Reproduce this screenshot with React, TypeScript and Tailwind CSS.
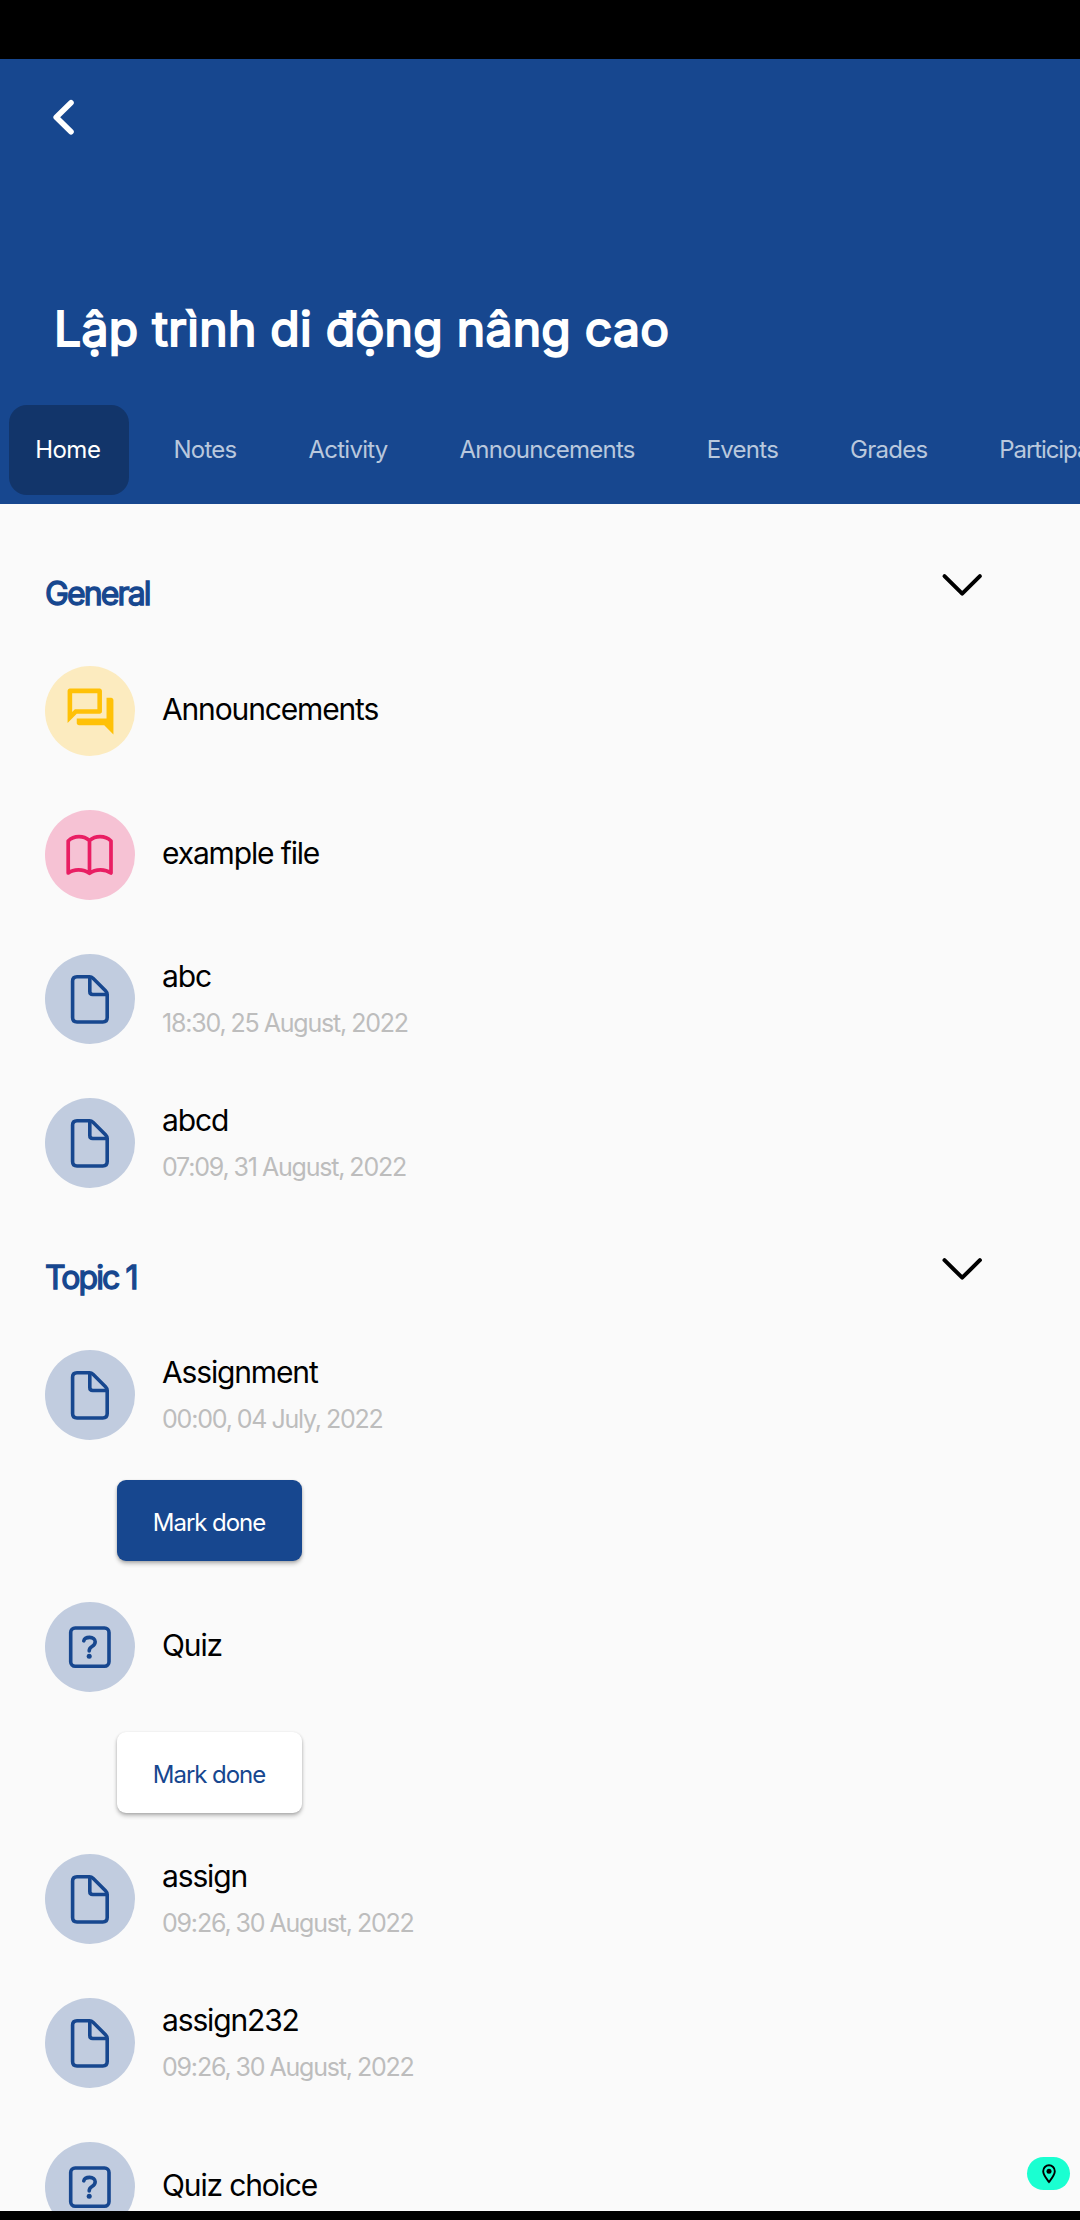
import type { ReactNode } from "react";

type Kind = "forum" | "book" | "file" | "quiz";
type Item = { kind: Kind; title: string; date?: string; button?: "filled" | "plain" };

const tabs = ["Home", "Notes", "Activity", "Announcements", "Events", "Grades", "Participants"];

const sections: { title: string; items: Item[] }[] = [
  {
    title: "General",
    items: [
      { kind: "forum", title: "Announcements" },
      { kind: "book", title: "example file" },
      { kind: "file", title: "abc", date: "18:30, 25 August, 2022" },
      { kind: "file", title: "abcd", date: "07:09, 31 August, 2022" },
    ],
  },
  {
    title: "Topic 1",
    items: [
      { kind: "file", title: "Assignment", date: "00:00, 04 July, 2022", button: "filled" },
      { kind: "quiz", title: "Quiz", button: "plain" },
      { kind: "file", title: "assign", date: "09:26, 30 August, 2022" },
      { kind: "file", title: "assign232", date: "09:26, 30 August, 2022" },
      { kind: "quiz", title: "Quiz choice" },
    ],
  },
];

const circle: Record<Kind, string> = {
  forum: "bg-[#fcebbf] text-[#ffc107]",
  book: "bg-[#f6c2d4] text-[#e91e63]",
  file: "bg-[#c1ccdf] text-[#17478f]",
  quiz: "bg-[#c1ccdf] text-[#17478f]",
};

const glyphs: Record<Kind, ReactNode> = {
  forum: (
    <svg viewBox="0 0 24 24" className="size-[55px]" fill="currentColor">
      <path d="M15 4v7H5.17L4 12.17V4h11m1-2H3c-.55 0-1 .45-1 1v14l4-4h10c.55 0 1-.45 1-1V3c0-.55-.45-1-1-1zm5 4h-2v9H6v2c0 .55.45 1 1 1h11l4 4V7c0-.55-.45-1-1-1z" />
    </svg>
  ),
  book: (
    <svg viewBox="0 0 90 90" className="size-[90px]" fill="none" stroke="currentColor" strokeWidth="3.7" strokeLinejoin="round">
      <path d="M44.5 30.5C41.5 28 38 26.7 34 26.7C29.5 26.7 26 28.2 23.2 31V63C26 60.8 29.5 59.8 33.5 59.8C38 59.8 41.5 61 44.5 63.4C47.5 61 51 59.8 55.5 59.8C59.5 59.8 63 60.8 66 63V31C63.2 28.2 59.5 26.7 55 26.7C51 26.7 47.5 28 44.5 30.5ZM44.5 30.5V63" />
    </svg>
  ),
  file: (
    <svg viewBox="0 0 90 90" className="size-[90px]" fill="none" stroke="currentColor" strokeWidth="3.6" strokeLinejoin="round">
      <path d="M32 22.7H44.5C46 22.7 47 23.2 48 24.2L60.5 36.7C61.6 37.8 62.2 38.8 62.2 40.4V63.6C62.2 66.4 60.6 68 57.8 68H32C29.2 68 27.6 66.4 27.6 63.6V27.1C27.6 24.3 29.2 22.7 32 22.7Z" />
      <path d="M44.8 23V37.6C44.8 39.5 45.8 40.5 47.7 40.5H62" />
    </svg>
  ),
  quiz: (
    <svg viewBox="0 0 90 90" className="size-[90px]" fill="none" stroke="currentColor" strokeWidth="3.6" strokeLinecap="round">
      <rect x="25.7" y="26" width="38.3" height="38.3" rx="4.5" />
      <path d="M38.8 38.8C39.3 36.6 41.4 35.4 44.6 35.4C48 35.4 50.2 37.2 50.2 39.8C50.2 42.1 49 43.3 47 44.5C45 45.7 44.2 46.8 44.2 49" />
      <circle cx="44.2" cy="54.3" r="2.5" fill="currentColor" stroke="none" />
    </svg>
  ),
};

function Section({ title, children }: { title: string; children: ReactNode }) {
  return (
    <section>
      <div className="flex h-[108px] items-center justify-between pr-[97px] pl-[45px]">
        <h2 className="pt-[18px] text-[32px] leading-10 tracking-[-1.9px] text-[#17478f] [-webkit-text-stroke:1.3px_#17478f]">
          {title}
        </h2>
        <svg viewBox="0 0 42 24" className="h-6 w-[42px]" fill="none" stroke="black" strokeWidth="4" strokeLinecap="round" strokeLinejoin="round">
          <path d="M3.5 3.2L21.2 20.7L38.9 3.2" />
        </svg>
      </div>
      {children}
    </section>
  );
}

function Row({ item }: { item: Item }) {
  return (
    <>
      <div className="flex h-36 items-center gap-[27px] pl-[45px]">
        <div className={`flex size-[90px] items-center justify-center rounded-full ${circle[item.kind]}`}>
          {glyphs[item.kind]}
        </div>
        <div className={item.date ? "pb-[3px]" : "pb-1"}>
          <div className="text-[30px] leading-10 tracking-[-1.15px] text-black">{item.title}</div>
          {item.date && (
            <div className="mt-[11px] text-[25px] leading-8 tracking-[-1.2px] text-[#bdbdbd] [word-spacing:-0.7px]">
              {item.date}
            </div>
          )}
        </div>
      </div>
      {item.button && (
        <div className="flex h-[108px] pt-[13px] pl-[117px]">
          <button
            className={`flex h-[81px] w-[185px] items-center justify-center rounded-[9px] pt-1 pr-px text-[24px] leading-8 tracking-[-1.05px] shadow-[0_3px_4px_rgba(0,0,0,0.22),0_1px_3px_rgba(0,0,0,0.16)] ${
              item.button === "filled" ? "bg-[#17478f] text-white" : "bg-white text-[#17478f]"
            }`}
          >
            Mark done
          </button>
        </div>
      )}
    </>
  );
}

export default function App() {
  return (
    <div className="relative flex h-[2220px] w-[1080px] flex-col overflow-hidden bg-[#fafafa] font-['Inter',sans-serif] font-[370]">
      <div className="h-[59px] shrink-0 bg-black" />
      <header className="flex h-[445px] shrink-0 flex-col bg-[#17478f]">
        <div className="h-[240px] shrink-0 pt-[39px] pl-[51px]">
          <svg viewBox="0 0 26 38" className="h-[38px] w-[26px]" fill="none" stroke="white" strokeWidth="5.6" strokeLinecap="round" strokeLinejoin="round">
            <path d="M20 4.7L5.2 19.2L20 33.7" />
          </svg>
        </div>
        <h1 className="pl-[54px] text-[48px] leading-[60px] font-normal tracking-[0.3px] text-white [-webkit-text-stroke:2px_white]">
          Lập trình di động nâng cao
        </h1>
        <nav className="mt-[46px] flex gap-[18px] overflow-hidden pl-[9px] whitespace-nowrap">
          {tabs.map((t, i) => (
            <div
              key={t}
              className={`flex h-[90px] shrink-0 items-center justify-center rounded-[18px] text-[24px] leading-8 ${
                i === 0
                  ? "w-[119.5px] bg-[#12356a] pr-[2px] tracking-[-0.5px] text-white"
                  : i === tabs.length - 1
                    ? "px-[27px] tracking-[-1.1px] text-[#b9c8dd]"
                    : "px-[27px] tracking-[-0.75px] text-[#b9c8dd]"
              }`}
            >
              {t}
            </div>
          ))}
        </nav>
      </header>
      <main className="min-h-0 flex-1 overflow-hidden pt-[27px]">
        {sections.map((s) => (
          <Section key={s.title} title={s.title}>
            {s.items.map((item) => (
              <Row key={item.title} item={item} />
            ))}
          </Section>
        ))}
      </main>
      <div className="h-[9px] shrink-0 bg-black" />
      <div className="absolute right-[10px] bottom-[30px] flex h-[33px] w-[43px] items-center justify-center rounded-full bg-[#1affd1]">
        <svg viewBox="0 0 14 20" className="h-5 w-[14px]" fill="none" stroke="black" strokeWidth="1.9">
          <path d="M7 18C4 14 1.2 10.7 1.2 7.2A5.8 5.9 0 0 1 12.8 7.2C12.8 10.7 10 14 7 18Z" />
          <circle cx="7" cy="7.2" r="2.5" fill="black" stroke="none" />
        </svg>
      </div>
    </div>
  );
}
